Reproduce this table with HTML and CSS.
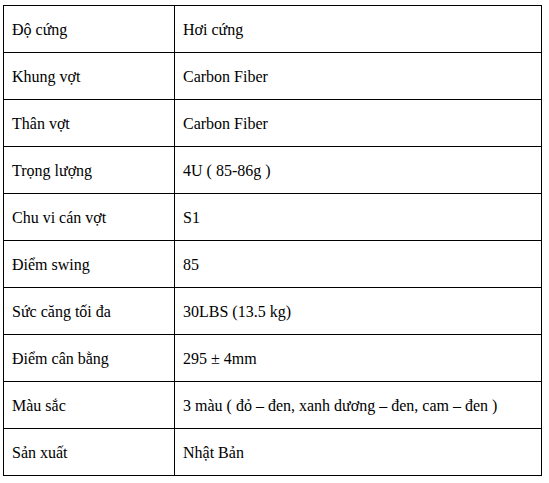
FILE: index.html
```html
<!DOCTYPE html>
<html lang="vi">
<head>
<meta charset="utf-8">
<link rel="stylesheet" href="styles.css">
</head>
<body>
<table class="spec">
  <tr><td class="k">Độ cứng</td><td class="v">Hơi cứng</td></tr>
  <tr><td class="k">Khung vợt</td><td class="v">Carbon Fiber</td></tr>
  <tr><td class="k">Thân vợt</td><td class="v">Carbon Fiber</td></tr>
  <tr><td class="k">Trọng lượng</td><td class="v">4U ( 85-86g )</td></tr>
  <tr><td class="k">Chu vi cán vợt</td><td class="v">S1</td></tr>
  <tr><td class="k">Điểm swing</td><td class="v">85</td></tr>
  <tr><td class="k">Sức căng tối đa</td><td class="v">30LBS (13.5 kg)</td></tr>
  <tr><td class="k">Điểm cân bằng</td><td class="v">295 ± 4mm</td></tr>
  <tr><td class="k">Màu sắc</td><td class="v">3 màu ( đỏ – đen, xanh dương – đen, cam – đen )</td></tr>
  <tr><td class="k">Sản xuất</td><td class="v">Nhật Bản</td></tr>
</table>
</body>
</html>
```
FILE: styles.css
```css
html, body {
  margin: 0;
  background: #fff;
}
body {
  padding: 5px 0 0 3px;
  color: #000;
}
.spec {
  border-collapse: collapse;
  width: 539px;
}
.spec td {
  font-family: "Liberation Serif", "Times New Roman", "DejaVu Serif", serif;
  font-size: 16px;
  border: 1px solid #000;
  height: 47px;
  padding: 1px 8px 0;
  vertical-align: middle;
  box-sizing: border-box;
}
.spec .k {
  width: 171px;
}
```
